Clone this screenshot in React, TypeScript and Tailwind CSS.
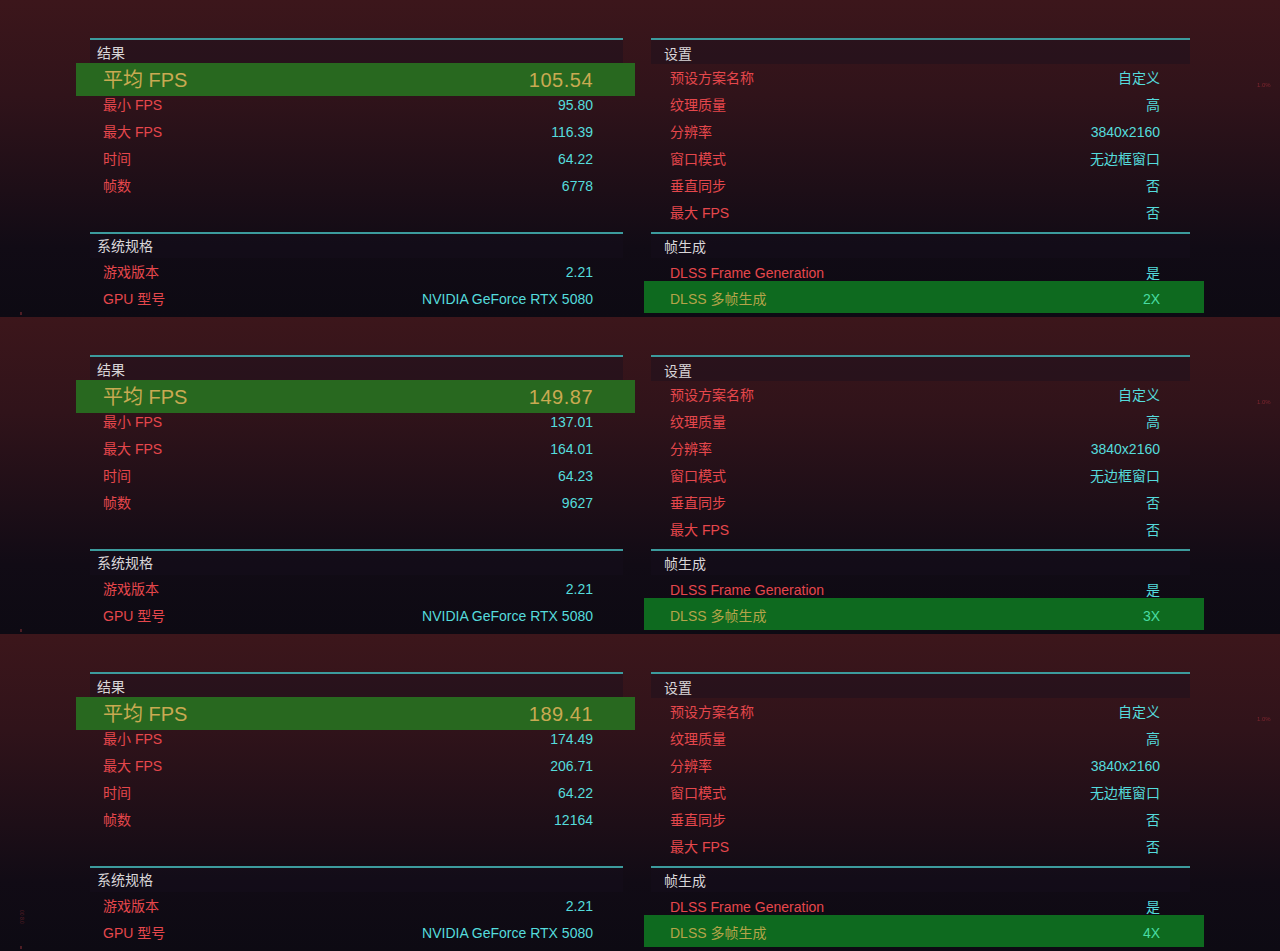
const FONT = "font-['Liberation_Sans','Noto_Sans_CJK_SC',sans-serif]";

type Run = {
  avg: string;
  min: string;
  max: string;
  time: string;
  frames: string;
  mfg: string;
};

const runs: Run[] = [
  { avg: "105.54", min: "95.80", max: "116.39", time: "64.22", frames: "6778", mfg: "2X" },
  { avg: "149.87", min: "137.01", max: "164.01", time: "64.23", frames: "9627", mfg: "3X" },
  { avg: "189.41", min: "174.49", max: "206.71", time: "64.22", frames: "12164", mfg: "4X" },
];

const settings: [string, string][] = [
  ["预设方案名称", "自定义"],
  ["纹理质量", "高"],
  ["分辨率", "3840x2160"],
  ["窗口模式", "无边框窗口"],
  ["垂直同步", "否"],
  ["最大 FPS", "否"],
];

function Header({ title, pad, h, pt }: { title: string; pad: string; h: string; pt: string }) {
  return (
    <>
      <div className="h-[2px] bg-[#3c9b9d]" />
      <div className={`${h} ${pad} ${pt} bg-[#170f1f]/40 text-[14px] leading-[18px] text-[#d9d6d8]`}>{title}</div>
    </>
  );
}

function Row({ label, value, right }: { label: string; value: string; right?: boolean }) {
  return (
    <div
      className={`flex h-[27px] items-start justify-between ${right ? "pl-[19px]" : "pl-[13px]"} pr-[30px] text-[14px] leading-[18px]`}
    >
      <span className="text-[#e5474c]">{label}</span>
      <span className="text-[#55dcdc]">{value}</span>
    </div>
  );
}

function Panel({ run, last }: { run: Run; last?: boolean }) {
  return (
    <div className="relative flex h-[317px] overflow-hidden bg-[linear-gradient(to_bottom,#3c161b_0%,#30131a_30%,#1d0e17_60%,#110b15_78%,#0d0a13_100%)]">
      {/* left column */}
      <div className="ml-[90px] flex w-[533px] flex-col pt-[38px]">
        <Header title="结果" pad="pl-[7px]" h="h-[23px]" pt="pt-[4px]" />
        <div className="-ml-[14px] -mr-[12px] flex h-[33px] items-center justify-between bg-[#28681f] pl-[27px] pr-[42px] text-[20px] leading-[24px] text-[#c9aa52]">
          <span>平均 FPS</span>
          <span className="tracking-[0.5px]">{run.avg}</span>
        </div>
        <Row label="最小 FPS" value={run.min} />
        <Row label="最大 FPS" value={run.max} />
        <Row label="时间" value={run.time} />
        <Row label="帧数" value={run.frames} />
        <div className="h-[28px]" />
        <Header title="系统规格" pad="pl-[7px]" h="h-[24px]" pt="pt-[3px]" />
        <div className="h-[5px]" />
        <Row label="游戏版本" value="2.21" />
        <Row label="GPU 型号" value="NVIDIA GeForce RTX 5080" />
      </div>

      {/* right column */}
      <div className="ml-[28px] flex w-[539px] flex-col pt-[38px]">
        <Header title="设置" pad="pl-[13px]" h="h-[24px]" pt="pt-[5px]" />
        <div className="h-[5px]" />
        {settings.map(([l, v]) => (
          <Row key={l} label={l} value={v} right />
        ))}
        <div className="h-[1px]" />
        <Header title="帧生成" pad="pl-[13px]" h="h-[24px]" pt="pt-[4px]" />
        <div className="h-[6px]" />
        <div className="flex h-[17px] items-start justify-between pl-[19px] pr-[30px] text-[14px] leading-[18px]">
          <span className="text-[#e5474c]">DLSS Frame Generation</span>
          <span className="text-[#55dcdc]">是</span>
        </div>
        <div className="-ml-[7px] -mr-[14px] flex h-[32px] items-center justify-between bg-[#0e6a1f] pl-[26px] pr-[44px] pt-[3px] text-[14px] leading-[18px]">
          <span className="text-[#b4a449]">DLSS 多帧生成</span>
          <span className="text-[#48dca2]">{run.mfg}</span>
        </div>
      </div>

      <span className="absolute left-[1257px] top-[82px] text-[6px] leading-none text-[#b0323c]/60 blur-[0.4px]">1.0%</span>
      <span className="absolute left-[20px] top-[312px] h-[3px] w-[2px] bg-[#7a2a30]/60" />
      {last && (
        <span className="absolute left-[24px] top-[276px] origin-top-left rotate-90 text-[5px] leading-none text-[#8a2a32]/70">
          00 8.0
        </span>
      )}
    </div>
  );
}

export default function App() {
  return (
    <div className={`${FONT} flex h-[951px] w-[1280px] flex-col overflow-hidden bg-[#0d0a13]`}>
      {runs.map((r, i) => (
        <Panel key={r.avg} run={r} last={i === runs.length - 1} />
      ))}
    </div>
  );
}
